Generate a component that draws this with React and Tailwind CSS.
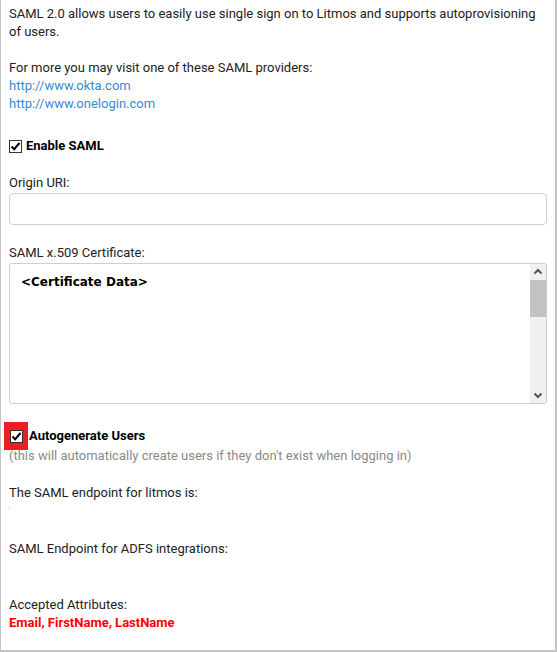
import React, { useState } from "react";

// Checkbox drawn in the classic boxed style with a heavy tick
function Tick({ checked, onChange }) {
  return (
    <button
      type="button"
      onClick={onChange}
      className="w-[13px] h-[13px] border border-[#333] bg-white flex items-center justify-center shrink-0"
    >
      {checked && (
        <svg width="11" height="11" viewBox="0 0 11 11">
          <path d="M1.5 5.5 L4.2 8.2 L9.5 2" fill="none" stroke="#000" strokeWidth="2" />
        </svg>
      )}
    </button>
  );
}

export default function App() {
  const [enableSaml, setEnableSaml] = useState(true);
  const [autoUsers, setAutoUsers] = useState(true);
  const [origin, setOrigin] = useState("");

  return (
    <div
      className="w-[557px] h-[652px] bg-white border-l border-r-2 border-b-2 border-[#c4c4c4] pl-[8px] pr-[8px] pt-[5px] text-[13px] leading-[18px] text-[#222]"
      style={{ fontFamily: "Roboto, 'Liberation Sans', sans-serif" }}
    >
      <p>
        SAML 2.0 allows users to easily use single sign on to Litmos and supports autoprovisioning of users.
      </p>

      <div className="mt-[18px]">
        <p>For more you may visit one of these SAML providers:</p>
        <a href="#" className="block text-[#3b8ad1]">http://www.okta.com</a>
        <a href="#" className="block text-[#3b8ad1]">http://www.onelogin.com</a>
      </div>

      <label className="mt-[24px] flex items-center gap-[4px] h-[18px]">
        <Tick checked={enableSaml} onChange={() => setEnableSaml(!enableSaml)} />
        <span className="font-bold text-black">Enable SAML</span>
      </label>

      <p className="mt-[19px]">Origin URI:</p>
      <input
        value={origin}
        onChange={(e) => setOrigin(e.target.value)}
        className="mt-[1px] w-[538px] h-[32px] border border-[#cfcfcf] rounded-[4px] px-[10px] outline-none"
      />

      <p className="mt-[19px]">SAML x.509 Certificate:</p>
      <div className="mt-[1px] w-[538px] h-[141px] border border-[#cfcfcf] rounded-[3px] flex overflow-hidden">
        <div
          className="flex-1 px-[11px] pt-[9px] font-bold text-[12px] text-black"
          style={{ fontFamily: "'DejaVu Sans', sans-serif" }}
        >
          &lt;Certificate Data&gt;
        </div>
        <div className="w-[16px] bg-[#f0f0f0] flex flex-col items-center">
          <svg width="16" height="16" viewBox="0 0 16 16" className="shrink-0">
            <path d="M4.5 9.5 L8 6 L11.5 9.5" fill="none" stroke="#555" strokeWidth="2" />
          </svg>
          <div className="w-[16px] h-[37px] bg-[#c2c2c2]" />
          <div className="flex-1" />
          <svg width="16" height="16" viewBox="0 0 16 16" className="shrink-0">
            <path d="M4.5 6.5 L8 10 L11.5 6.5" fill="none" stroke="#555" strokeWidth="2" />
          </svg>
        </div>
      </div>

      <label className="mt-[23px] flex items-center gap-[5px] h-[18px]">
        <span className="-ml-[5px] w-[24px] h-[28px] bg-[#ee1c25] flex items-center justify-center shrink-0">
          <Tick checked={autoUsers} onChange={() => setAutoUsers(!autoUsers)} />
        </span>
        <span className="font-bold text-black -ml-[4px]">Autogenerate Users</span>
      </label>
      <p className="mt-[2px] text-[#8a8a8a]">(this will automatically create users if they don't exist when logging in)</p>

      <p className="mt-[19px]">The SAML endpoint for litmos is:</p>
      <div className="h-[38px] pt-[4px]">
        <span className="block w-[1px] h-[3px] bg-[#e8d9a8]" />
      </div>

      <p>SAML Endpoint for ADFS integrations:</p>

      <p className="mt-[38px]">Accepted Attributes:</p>
      <p className="font-bold text-[#f00]">Email, FirstName, LastName</p>
    </div>
  );
}
